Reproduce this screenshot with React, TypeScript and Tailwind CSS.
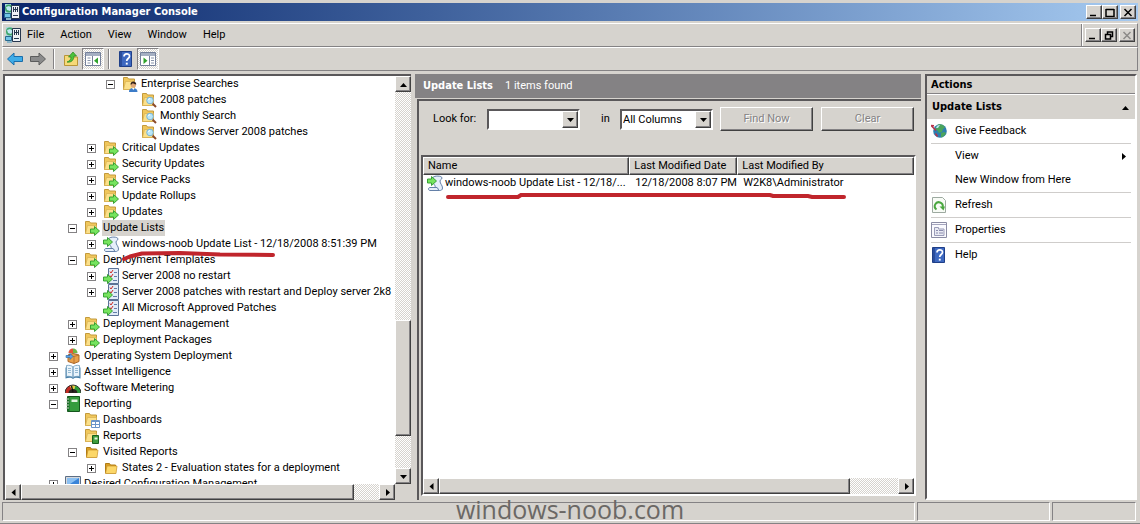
import { useState } from "react";
import type { ReactNode } from "react";
import clsx from "clsx";

const RAISED =
  "bg-[#d6d3ce] border border-t-white border-l-white border-b-[#404040] border-r-[#404040] shadow-[inset_-1px_-1px_0_#848284]";
const SUNKEN =
  "border-2 border-t-[#5a585a] border-l-[#5a585a] border-b-white border-r-white";
const DITHER =
  "bg-[repeating-conic-gradient(#ffffff_0_25%,#d6d3ce_0_50%)] bg-[length:2px_2px]";
const HEADING = "font-['DejaVu_Sans_Condensed','DejaVu_Sans',sans-serif] font-bold";

type IconProps = { children: ReactNode; size?: number };

function Svg({ children, size = 16 }: IconProps) {
  return (
    <svg width={size} height={size} viewBox="0 0 16 16" className="block shrink-0" aria-hidden="true">
      {children}
    </svg>
  );
}

function FolderShape() {
  return (
    <>
      <path d="M1.500 1.500h4l1 1.500h6v10.500h-11z" fill="#f0c75c" stroke="#c39a3c" />
      <path d="M3.500 5.500h9v8h-11z" fill="#fbe08a" stroke="#d8b050" strokeWidth=".7" />
    </>
  );
}

function GreenArrow({ x = 0, y = 0 }: { x?: number; y?: number }) {
  return (
    <path
      transform={`translate(${x} ${y})`}
      d="M.5 3h4V.5L9.5 5 4.500 9.500V7h-4z"
      fill="#76e45e"
      stroke="#2c9a2c"
      strokeWidth=".9"
    />
  );
}

const icons: Record<string, ReactNode> = {
  folder: (
    <>
      <path d="M2.500 3.500h4l1 1.500h5v8h-10z" fill="#d99e24" stroke="#b07c14" />
      <path d="M4 6h10l-1 7.500H2.500z" fill="#fcd768" stroke="#c8922a" strokeWidth=".7" />
    </>
  ),
  folderArrow: (
    <>
      <FolderShape />
      <GreenArrow x={6} y={6} />
    </>
  ),
  folderSearch: (
    <>
      <FolderShape />
      <path d="M11.500 11.500l3.500 3.500" stroke="#8a4a2c" strokeWidth="2" />
      <circle cx="9" cy="8.500" r="3.300" fill="#b9e6f8" stroke="#7ab4d4" />
      <path d="M7.500 8a2 2 0 0 1 1.500-1.500" stroke="#fff" fill="none" />
    </>
  ),
  folderUser: (
    <>
      <FolderShape />
      <path d="M7 16c0-3 1.500-4 4-4s4.500 1 4.500 4z" fill="#3c7cc8" />
      <path d="M10 12l1.300 2 1.400-2z" fill="#fff" />
      <circle cx="11.300" cy="9" r="2.700" fill="#e0a878" />
      <path d="M8.500 8.500c0-4 5.800-4 5.800 0-2-.2-3-1-3.500-1.500-.5 1-1.300 1.500-2.300 1.500z" fill="#33221a" />
    </>
  ),
  listArrow: (
    <>
      <path d="M6 2.500C7 .5 15 .5 15 3c0 1.500-2 1.500-2 3 0 3 2.500 4 2.500 7 0 2-1.500 2.500-3 2.500H3c-2 0-2-3 0-3h5c1-2-2-4-3-6z" fill="#e6effa" stroke="#6480a8" />
      <path d="M3 12.500h7c1 0 1 3 2.500 3" fill="none" stroke="#6480a8" />
      <GreenArrow x={0} y={1} />
    </>
  ),
  template: (
    <>
      <path d="M5.500.5h10v15h-10z" fill="#e2ebf8" stroke="#5b7297" />
      <path d="M7 3.500l1 1.500 2-3M7 7.500l1 1.500 2-3" stroke="#d02822" fill="none" />
      <path d="M11 4.500h3M11 8.500h3M10 12.500h4" stroke="#647ea8" />
      <GreenArrow x={0} y={6} />
    </>
  ),
  osd: (
    <>
      <circle cx="8" cy="5" r="4.500" fill="#d9d9e6" />
      <path d="M8 5V.5A4.500 4.500 0 0 0 3.500 5z" fill="#e2553a" />
      <path d="M8 5V.5A4.500 4.500 0 0 1 12.500 5z" fill="#70b647" />
      <path d="M3 7l5-1.500L14 7v6.500L9 15.500l-6-2z" fill="#e9a04a" stroke="#aa6629" />
      <path d="M3 7l6 1.500v7M9 8.500L14 7" fill="none" stroke="#aa6629" strokeWidth=".7" />
      <path d="M1 7.500h4V5.500L8 8.500 5 11.500v-2H1z" fill="#5aa4e8" stroke="#2767a8" strokeWidth=".6" />
    </>
  ),
  book: (
    <>
      <path d="M.5 3.500v11c3-1 6-1 7.500.5 1.500-1.500 4.500-1.500 7.500-.5v-11z" fill="#477fa9" />
      <path d="M1.500 1.500c3-.5 5 0 6.500 1.500v10.500c-1.500-1-4-1.500-6.500-1zM14.500 1.500C11.500 1 9.500 1.500 8 3v10.500c1.500-1 4-1.500 6.500-1z" fill="#eaf4fb" stroke="#6d9abb" strokeWidth=".8" />
      <path d="M3 4.500h3M3 6.500h3M3 8.500h3M10 4.500h3M10 6.500h3M10 8.500h3" stroke="#7faac8" strokeWidth=".8" />
    </>
  ),
  gauge: (
    <>
      <path d="M0 13a8 8 0 0 1 5-7.500L8 13z" fill="#c32a22" />
      <path d="M5 5.500A8 8 0 0 1 10.500 5.500L8 13z" fill="#e8cf3a" />
      <path d="M10.500 5.500A8 8 0 0 1 16 13H8z" fill="#2d9a38" />
      <path d="M0 13a8 8 0 0 1 16 0" fill="none" stroke="#333" />
      <path d="M3.500 13a4.500 4 0 0 1 9 0z" fill="#2a2420" />
      <path d="M8 12L6.500 6" stroke="#111" strokeWidth="1.300" />
    </>
  ),
  greenBook: (
    <>
      <path d="M2.500.5h12v15h-12z" fill="#359b3d" stroke="#14561d" />
      <path d="M2.500 1v14h2V1z" fill="#1b6d29" />
      <path d="M6.500 3.500h6v2.500h-6z" fill="#e4f3e1" />
      <path d="M1 3h3M1 6h3M1 9h3M1 12h3" stroke="#c7d6c4" />
    </>
  ),
  folderGrid: (
    <>
      <FolderShape />
      <path d="M7.500 8.500h8v7h-8z" fill="#fff" stroke="#6a94c8" />
      <path d="M7.500 9.500h8M7.500 12.500h8M11.500 9v6" stroke="#6a94c8" />
    </>
  ),
  folderReport: (
    <>
      <FolderShape />
      <path d="M8.500 7.500h6v8h-6z" fill="#3f9d3d" stroke="#19601f" />
      <path d="M10.500 9.500h3v2h-3z" fill="#e4f3e1" />
    </>
  ),
  monitor: (
    <>
      <path d="M.5.5h15v11H.5z" fill="#d6d9dd" stroke="#5c6e85" />
      <path d="M2 2h12v8H2z" fill="#3a84d8" />
      <path d="M2 10L14 2H2z" fill="#8bc0f2" />
    </>
  ),
  app: (
    <>
      <path d="M1 0h6v9H1z" fill="#a9d7de" />
      <circle cx="5" cy="4.500" r="4" fill="#3fa56a" />
      <path d="M2 3l3-1 3 2-2 3-3-1z" fill="#bfe8f4" />
      <path d="M7.500 1.500h8v13h-8z" fill="#eef2f6" stroke="#26374f" />
      <path d="M9.500 3v5M11.500 3v5M13.500 3v5M9 5.500h5M9 11.500h5" stroke="#26374f" />
      <path d="M.5 9.500h6v4h-6z" fill="#72c5e8" stroke="#28698d" />
      <path d="M2 15h5" stroke="#8bb5c8" strokeWidth="2" />
    </>
  ),
  back: <path d="M.5 8L7 2v3.500h8.500v5H7V14z" fill="#3eace8" stroke="#1b6daa" />,
  forward: <path d="M15.500 8L9 2v3.500H.5v5H9V14z" fill="#8b8b8b" stroke="#5c5c5c" />,
  upFolder: (
    <>
      <path d="M1.500 4.500h5l1 1.500h7v8.500h-13z" fill="#f6d978" stroke="#b99538" />
      <path d="M4 11c3-1 4-3 4-5H5.500L10 1l3.500 4H11c0 4-3 7-7 6z" fill="#4dc23c" stroke="#26851f" strokeWidth=".7" />
    </>
  ),
  treePane: (
    <>
      <path d="M.5 1.500h15v13H.5z" fill="#fff" stroke="#74809a" />
      <path d="M1 2h14v3H1z" fill="#a5afc2" />
      <path d="M7.500 5v9" stroke="#74809a" />
      <path d="M2.500 7h3M2.500 9.500h3M2.500 12h3" stroke="#8994aa" />
      <path d="M13 6.500v6.500L9 9.800z" fill="#2fa32b" />
    </>
  ),
  actionPane: (
    <>
      <path d="M.5 1.500h15v13H.5z" fill="#fff" stroke="#74809a" />
      <path d="M1 2h14v3H1z" fill="#a5afc2" />
      <path d="M9.500 5v9" stroke="#74809a" />
      <path d="M11 7h3M11 9.500h3M11 12h3" stroke="#8994aa" />
      <path d="M3.500 6.500v6.500l4-3.200z" fill="#2fa32b" />
    </>
  ),
  help: (
    <>
      <path d="M1.500.5h12v15h-12z" fill="#3d68c0" stroke="#1f3f88" />
      <path d="M2 1h2v14H2z" fill="#2a4d9c" />
      <path d="M6 5.500c0-3.500 5.500-3.500 5.500-.3C11.500 7.500 8.700 7.500 8.700 10" fill="none" stroke="#fff" strokeWidth="1.700" />
      <path d="M7.800 11.700h1.900v1.900H7.800z" fill="#fff" />
    </>
  ),
  globe: (
    <>
      <circle cx="9" cy="8" r="6.800" fill="#2d7eb0" />
      <path d="M7 1.500c3-.8 6 .5 7 3l-2 1.500-1 3-3 1-2-3-2-1zM10 10l3-1 2 1c-1 2.500-3 4-5 4.500z" fill="#4ba45c" />
      <path d="M6 3c1-1 2-1 3-1L7 5 5 5z" fill="#b9e3ef" />
      <path d="M0 2.500l5 5M0 2.500l3 .3M4.500 10.500l2 3" stroke="#b8324a" strokeWidth="1.400" />
    </>
  ),
  refresh: (
    <>
      <path d="M1.500.5h10l3 3v12h-13z" fill="#f8fbf6" stroke="#9daaa0" />
      <path d="M5.500 12.500A4 4 0 1 1 11.700 10" fill="none" stroke="#4aa73f" strokeWidth="2" />
      <path d="M8.500 9.500h5.500l-1.500 4z" fill="#4aa73f" />
    </>
  ),
  properties: (
    <>
      <path d="M.5.5h15v15H.5z" fill="#fafafe" stroke="#8b8ca4" />
      <path d="M1 2.500h14" stroke="#a5a5be" />
      <path d="M3.500 5.500h4v1.500h5.500v6.500H3.500z" fill="#e9eaf3" stroke="#9a9cb8" />
      <path d="M5 8.500h2M8 8.500h4M5 11h2M8 11h4" stroke="#8a8cae" />
    </>
  ),
};

function Icon({ name }: { name: string }) {
  return <Svg>{icons[name]}</Svg>;
}

type Node = {
  label: string;
  level: number;
  icon: string;
  open?: boolean;
  selected?: boolean;
  marked?: boolean;
};

const nodes: Node[] = [
  { label: "Enterprise Searches", level: 3, icon: "folderUser", open: true },
  { label: "2008 patches", level: 4, icon: "folderSearch" },
  { label: "Monthly Search", level: 4, icon: "folderSearch" },
  { label: "Windows Server 2008 patches", level: 4, icon: "folderSearch" },
  { label: "Critical Updates", level: 2, icon: "folderArrow", open: false },
  { label: "Security Updates", level: 2, icon: "folderArrow", open: false },
  { label: "Service Packs", level: 2, icon: "folderArrow", open: false },
  { label: "Update Rollups", level: 2, icon: "folderArrow", open: false },
  { label: "Updates", level: 2, icon: "folderArrow", open: false },
  { label: "Update Lists", level: 1, icon: "folderArrow", open: true, selected: true },
  { label: "windows-noob Update List - 12/18/2008 8:51:39 PM", level: 2, icon: "listArrow", open: false, marked: true },
  { label: "Deployment Templates", level: 1, icon: "folderArrow", open: true },
  { label: "Server 2008 no restart", level: 2, icon: "template", open: false },
  { label: "Server 2008 patches with restart and Deploy server 2k8", level: 2, icon: "template", open: false },
  { label: "All Microsoft Approved Patches", level: 2, icon: "template" },
  { label: "Deployment Management", level: 1, icon: "folderArrow", open: false },
  { label: "Deployment Packages", level: 1, icon: "folderArrow", open: false },
  { label: "Operating System Deployment", level: 0, icon: "osd", open: false },
  { label: "Asset Intelligence", level: 0, icon: "book", open: false },
  { label: "Software Metering", level: 0, icon: "gauge", open: false },
  { label: "Reporting", level: 0, icon: "greenBook", open: true },
  { label: "Dashboards", level: 1, icon: "folderGrid" },
  { label: "Reports", level: 1, icon: "folderReport" },
  { label: "Visited Reports", level: 1, icon: "folder", open: true },
  { label: "States 2 - Evaluation states for a deployment", level: 2, icon: "folder", open: false },
  { label: "Desired Configuration Management", level: 0, icon: "monitor", open: false },
];

const indents = ["pl-[44px]", "pl-[63px]", "pl-[82px]", "pl-[101px]", "pl-[120px]"];

function Expander({ open, label }: { open: boolean; label: string }) {
  return (
    <button type="button" aria-label={`${open ? "Collapse" : "Expand"} ${label}`} className="block">
      <svg width="9" height="9" viewBox="0 0 9 9" shapeRendering="crispEdges" className="block">
        <path d="M.5.5h8v8h-8z" fill="#fff" stroke="#848284" />
        <path d={open ? "M2 4.500h5" : "M2 4.500h5M4.500 2v5"} stroke="#000" />
      </svg>
    </button>
  );
}

function Arrow({ dir }: { dir: "up" | "down" | "left" | "right" }) {
  const paths = {
    up: "M0 6h7L3.500 2z",
    down: "M0 2h7L3.500 6z",
    left: "M5.500 0v7L1.500 3.500z",
    right: "M2 0v7l4-3.500z",
  };
  return (
    <svg width="7" height="7" viewBox="0 0 7 7" className="block" aria-hidden="true">
      <path d={paths[dir]} />
    </svg>
  );
}

function ScrollButton({ dir }: { dir: "up" | "down" | "left" | "right" }) {
  return (
    <button
      type="button"
      aria-label={`Scroll ${dir}`}
      className={clsx("flex size-4 shrink-0 items-center justify-center", RAISED)}
    >
      <Arrow dir={dir} />
    </button>
  );
}

function WindowButton({ label, d, disabled }: { label: string; d: string; disabled?: boolean }) {
  return (
    <button
      type="button"
      aria-label={label}
      disabled={disabled}
      className={clsx("flex h-3.5 w-4 items-center justify-center", RAISED)}
    >
      <svg width="10" height="9" viewBox="0 0 10 9" className="block">
        <path d={d} fill="none" stroke={disabled ? "#8c8a88" : "#000"} strokeWidth="1.500" />
      </svg>
    </button>
  );
}

const MINIMIZE = "M1 7.500h6";
const MAXIMIZE = "M1 1.500h8M1 1v7.500h8V1";
const RESTORE = "M3.500 3V1h5v4.500H7M1.500 3.500h5v4.500h-5z";
const CLOSE = "M1.500 1l7 7M8.500 1l-7 7";

function TitleBar() {
  return (
    <header className="mx-0.5 flex h-[18px] items-center bg-linear-to-r from-[#0a246a] to-[#a6caf0] pr-0.5 pl-0.5">
      <Icon name="app" />
      <h1 className={clsx("ml-0.5 flex-1 text-white", HEADING)}>Configuration Manager Console</h1>
      <WindowButton label="Minimize" d={MINIMIZE} />
      <WindowButton label="Maximize" d={MAXIMIZE} />
      <span className="w-0.5" />
      <WindowButton label="Close" d={CLOSE} />
    </header>
  );
}

function MenuBar() {
  return (
    <div className="flex h-6 border border-t-white border-r-[#848284] border-b-[#848284] border-l-white">
      <nav className="flex flex-1 items-center gap-4 border-r border-[#848284] pl-0.5">
        <span className="-mr-2.5">
          <Icon name="app" />
        </span>
        {["File", "Action", "View", "Window", "Help"].map((item) => (
          <button key={item} type="button">
            {item}
          </button>
        ))}
      </nav>
      <div className="flex items-center border-l border-white pr-0.5 pl-0.5">
        <WindowButton label="Minimize child window" d={MINIMIZE} />
        <WindowButton label="Restore child window" d={RESTORE} />
        <span className="w-0.5" />
        <WindowButton label="Close child window" d={CLOSE} disabled />
      </div>
    </div>
  );
}

function ToolButton({ icon, label, pressed }: { icon: string; label: string; pressed?: boolean }) {
  return (
    <button
      type="button"
      aria-label={label}
      className={clsx(
        "flex h-[22px] items-center justify-center",
        pressed ? "w-[22px] border border-t-[#848284] border-r-white border-b-white border-l-[#848284]" : "w-[23px]",
        pressed && DITHER
      )}
    >
      <Icon name={icon} />
    </button>
  );
}

function ToolBar() {
  return (
    <div className="flex h-6 items-center border border-t-white border-r-[#848284] border-b-[#848284] border-l-white">
      <ToolButton icon="back" label="Back" />
      <ToolButton icon="forward" label="Forward" />
      <span className="mx-1 h-5 w-0.5 border-l border-[#848284] bg-white" />
      <ToolButton icon="upFolder" label="Up one level" />
      <ToolButton icon="treePane" label="Show or hide console tree" pressed />
      <span className="mx-1 h-5 w-0.5 border-l border-[#848284] bg-white" />
      <ToolButton icon="help" label="Help" />
      <ToolButton icon="actionPane" label="Show or hide action pane" pressed />
    </div>
  );
}

function TreeRow({ node }: { node: Node }) {
  return (
    <li className={clsx("relative flex h-4 items-center whitespace-nowrap", indents[node.level])}>
      <span className="mr-[7px] w-[9px] shrink-0">
        {node.open !== undefined && <Expander open={node.open} label={node.label} />}
      </span>
      <Icon name={node.icon} />
      <span className={clsx("ml-0.5 px-px leading-4", node.selected && "bg-[#d6d3ce]")}>{node.label}</span>
      {node.marked && (
        <svg width="158" height="14" viewBox="0 0 158 14" className="absolute top-3 left-[115px] z-10" aria-hidden="true">
          <path d="M4 11l6-2.500L22 5.500 60 5l40 1.500 53 .5" fill="none" stroke="#c0252c" strokeWidth="4" strokeLinecap="round" strokeLinejoin="round" />
        </svg>
      )}
    </li>
  );
}

function TreePane() {
  return (
    <section
      aria-label="Console tree"
      className="flex min-w-0 flex-col border-t-2 border-l-2 border-[#5a585a] bg-white"
    >
      <div className="flex min-h-0 flex-1">
        <ul className="min-w-0 flex-1 overflow-hidden">
          {nodes.map((node) => (
            <TreeRow key={node.label} node={node} />
          ))}
        </ul>
        <div className={clsx("flex w-4 flex-col", DITHER)}>
          <ScrollButton dir="up" />
          <div className="flex-[229]" />
          <div className={clsx("flex-[114]", RAISED)} />
          <div className="flex-[32]" />
          <ScrollButton dir="down" />
        </div>
      </div>
      <div className="flex h-4 bg-[#d6d3ce]">
        <div className={clsx("flex flex-1", DITHER)}>
          <ScrollButton dir="left" />
          <div className={clsx("flex-[334]", RAISED)} />
          <div className="flex-[25]" />
          <ScrollButton dir="right" />
        </div>
        <div className="w-4" />
      </div>
    </section>
  );
}

function SearchBar() {
  const [term, setTerm] = useState("");
  const [column, setColumn] = useState("All Columns");

  const drop = clsx("flex h-[17px] w-4 items-center justify-center", RAISED);
  const button = clsx("h-6 min-w-0 flex-1 text-[#848284] [text-shadow:1px_1px_0_#fff]", RAISED);

  return (
    <form className="flex h-[54px] items-start pt-[6px] pl-3.5" onSubmit={(e) => e.preventDefault()}>
      <label htmlFor="look-for" className="mt-1 w-[54px] leading-4">
        Look for:
      </label>
      <div className={clsx("mt-0.5 flex h-[21px] w-[93px] bg-white", SUNKEN)}>
        <input
          id="look-for"
          value={term}
          onChange={(e) => setTerm(e.target.value)}
          className="min-w-0 flex-1 px-0.5 outline-none"
        />
        <button type="button" aria-label="Recent searches" className={drop}>
          <Arrow dir="down" />
        </button>
      </div>
      <label htmlFor="in-column" className="mt-1 ml-[21px] w-[19px] leading-4">
        in
      </label>
      <div className={clsx("relative mt-0.5 h-[21px] w-[93px] bg-white", SUNKEN)}>
        <select
          id="in-column"
          value={column}
          onChange={(e) => setColumn(e.target.value)}
          className="block h-[17px] w-full appearance-none pl-px leading-4 outline-none"
        >
          <option>All Columns</option>
          <option>Name</option>
        </select>
        <span className={clsx("pointer-events-none absolute top-0 right-0", drop)}>
          <Arrow dir="down" />
        </span>
      </div>
      <div className="ml-[7px] flex flex-1 gap-2 pr-0.5">
        <button type="submit" disabled className={button}>
          Find Now
        </button>
        <button type="button" disabled className={button}>
          Clear
        </button>
      </div>
    </form>
  );
}

function ResultsPane() {
  const th = clsx("h-[17px] pl-1 text-left font-normal whitespace-nowrap", RAISED);
  return (
    <section aria-label="Update Lists" className="flex min-w-0 flex-col">
      <div className="flex h-6 items-center gap-3 bg-[#848284] pl-2 text-white">
        <h2 className={HEADING}>Update Lists</h2>
        <span>1 items found</span>
      </div>
      <div className="mt-px ml-0.5 flex min-h-0 flex-1 flex-col border-t-2 border-l-2 border-[#5a585a] pr-[5px] pb-1">
        <SearchBar />
        <div className={clsx("ml-0.5 flex min-h-0 flex-1 flex-col bg-white", SUNKEN)}>
          <div className="relative min-h-0 flex-1">
            <table className="w-full table-fixed border-separate border-spacing-0">
              <thead>
                <tr>
                  <th className={clsx("w-[42%]", th)}>Name</th>
                  <th className={clsx("w-[22%]", th)}>Last Modified Date</th>
                  <th className={th}>Last Modified By</th>
                </tr>
              </thead>
              <tbody>
                <tr>
                  <td className="h-4 whitespace-nowrap">
                    <span className="flex items-center pl-1">
                      <Icon name="listArrow" />
                      <span className="ml-0.5">windows-noob Update List - 12/18/...</span>
                    </span>
                  </td>
                  <td className="pl-1.5 whitespace-nowrap">12/18/2008 8:07 PM</td>
                  <td className="pl-1.5 whitespace-nowrap">W2K8\Administrator</td>
                </tr>
              </tbody>
            </table>
            <svg width="404" height="8" viewBox="0 0 404 8" className="absolute top-[35px] left-[22px]" aria-hidden="true">
              <path d="M3 5h70l3-2h249l3 1 35 0 4 1h32" fill="none" stroke="#c0252c" strokeWidth="4" strokeLinecap="round" />
            </svg>
          </div>
          <div className={clsx("flex h-4", DITHER)}>
            <ScrollButton dir="left" />
            <div className={clsx("flex-[410]", RAISED)} />
            <div className="flex-[48]" />
            <ScrollButton dir="right" />
          </div>
        </div>
      </div>
    </section>
  );
}

const actions = [
  { label: "Give Feedback", icon: "globe", line: true },
  { label: "View", submenu: true },
  { label: "New Window from Here", line: true },
  { label: "Refresh", icon: "refresh", line: true },
  { label: "Properties", icon: "properties", line: true },
  { label: "Help", icon: "help" },
];

function ActionsPane() {
  return (
    <aside className={clsx("min-w-0 bg-white", SUNKEN)}>
      <h2 className={clsx("h-[18px] border-b border-[#848284] bg-[#d6d3ce] pl-1 leading-[18px]", HEADING)}>Actions</h2>
      <div className="flex h-[25px] items-center justify-between border-t border-white bg-[#d6d3ce] pr-1.5 pl-[5px]">
        <h3 className={HEADING}>Update Lists</h3>
        <Arrow dir="up" />
      </div>
      <ul className="pr-1 pl-1">
        {actions.map(({ label, icon, line, submenu }) => (
          <li key={label} className={clsx(line && "border-b border-[#cfcdcb]")}>
            <button type="button" className="flex h-6 w-full items-center gap-2 pr-1 text-left">
              <span className="w-4">{icon && <Icon name={icon} />}</span>
              <span className="flex-1">{label}</span>
              {submenu && <Arrow dir="right" />}
            </button>
          </li>
        ))}
      </ul>
    </aside>
  );
}

function StatusBar() {
  const cell = "border border-t-[#848284] border-r-white border-b-white border-l-[#848284]";
  return (
    <footer className="relative mt-0.5 flex h-[19px] gap-0.5 pr-1 pl-0.5">
      <div className={clsx("flex-[917]", cell)} />
      <div className={clsx("flex-[131]", cell)} />
      <div className={clsx("flex-[83]", cell)} />
      <p className="absolute inset-x-0 -top-1.5 text-center font-['Open_Sans',sans-serif] text-[25px] leading-[26px] text-[#6b6865]">
        windows-noob.com
      </p>
    </footer>
  );
}

export default function App() {
  return (
    <div className="flex h-screen flex-col overflow-hidden border-b border-[#848284] bg-[#d6d3ce] pt-[3px] pb-0.5 font-[Roboto,sans-serif] text-[11px] leading-4 text-black">
      <TitleBar />
      <div className="mx-0.5 mt-0.5">
        <MenuBar />
        <ToolBar />
      </div>
      <main className="mx-[3px] mt-[3px] grid min-h-0 flex-1 grid-cols-[408fr_506fr_212fr] grid-rows-[minmax(0,1fr)] gap-1">
        <TreePane />
        <ResultsPane />
        <ActionsPane />
      </main>
      <StatusBar />
    </div>
  );
}
